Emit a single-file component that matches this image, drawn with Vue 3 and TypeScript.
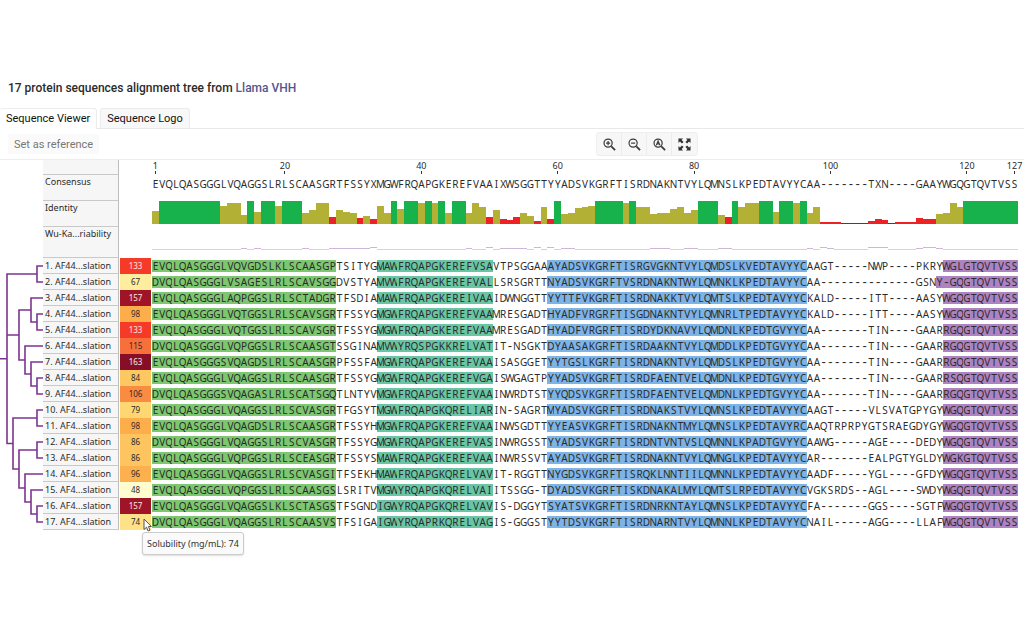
<script setup lang="ts">
interface Row {
  name: string
  score: number
  color: string
  light?: boolean
  parts: string
}
type Tree = number | [Tree, Tree]
interface Bar {
  height: number
  kind: string
}

const consensus =
  'EVQLQASGGGLVQAGGSLRLSCAASGRTFSSYXMGWFRQAPGKEREFVAAIXWSGGTTYYADSVKGRFTISRDNAKNTVYLQMNSLKPEDTAVYYCAA-------TXN----GAAYWGQGTQVTVSS'

const regions = ['fr1', 'gap', 'fr2', 'gap', 'fr3', 'gap', 'fr4']

const rows: Row[] = [
  { name: '1. AF44...slation', score: 133, color: '#f63a28', light: true, parts: 'EVQLQASGGGLVQVGDSLKLSCAASGP|TSITYG|MAWFRQAPGKEREFVSA|VTPSGGAA|AYADSVKGRFTISRGVGKNTVYLQMDSLKVEDTAVYYC|AAGT-----NWP----PKRY|WGLGTQVTVSS' },
  { name: '2. AF44...slation', score: 67, color: '#feec9f', parts: 'DVQLQASGGGLVSAGESLRLSCAVSGG|DVSTYA|MVWFRQAPGKEREFVAL|LSRSGRTT|NYADSVKGRFTVSRDNAKNTWYLQMNKLKPEDTAVYYC|AA--------------GSN|Y-GQGTQVTVSS' },
  { name: '3. AF44...slation', score: 157, color: '#a01427', light: true, parts: 'EVQLQASGGGLAQPGGSLRLSCTADGR|TFSDIA|MAWFRQAPGKEREIVAA|IDWNGGTT|YYTTFVKGRFTISRDNAKKTVYLQMTSLKPEDTAVYYC|KALD-----ITT----AASY|WGQGTQVTVSS' },
  { name: '4. AF44...slation', score: 98, color: '#fdae4b', parts: 'EVQLQASGGGLVQTGGSLRLSCAVSGR|TFSSYG|MGWFRQAPGKEREFVAA|MRESGADT|HYADFVRGRFTISGDNAKNTVYLQMNRLTPEDTAVYYC|KALD-----ITT----AASY|WGQGTQVTVSS' },
  { name: '5. AF44...slation', score: 133, color: '#f63a28', light: true, parts: 'EVQLQASGGGLVQTGGSLRLSCAVSGR|TFSSYG|MGWFRQAPGKEREFVAA|MRESGADT|HYADFVRGRFTISRDYDKNAVYLQMDNLKPEDTGVYYC|AA-------TIN----GAAR|RGQGTQVTVSS' },
  { name: '6. AF44...slation', score: 115, color: '#f7703c', parts: 'DVQLQASGGGLVQPGGSLRLSCAASGT|SSGINA|MVWYRQSPGKKRELVAT|IT-NSGKT|DYAASAKGRFTISRDAAKNTVYLQMDDLKPEDTGVYYC|AA-------TIN----GAAR|RGQGTQVTVSS' },
  { name: '7. AF44...slation', score: 163, color: '#860f26', light: true, parts: 'EVQLQASGGGSVQAGDSLRLSCAASGR|PFSSFA|MGWFRQAPGKEREFVAA|ISASGGET|YYTGSLKGRFTISRDNAKNTVYLQMDSLKPEDTGVYYC|AA-------TIN----GAAR|RGQGTQVTVSS' },
  { name: '8. AF44...slation', score: 84, color: '#fdc862', parts: 'EVQLQASGGGLVQAGGSLRLSCAASGR|TFSSYG|MGWFRQAPGKEREFVGA|ISWGAGTP|YYADSVKGRFTISRDFAENTVELQMDNLKPEDTGVYYC|AA-------TIN----GAAR|RSQGTQVTVSS' },
  { name: '9. AF44...slation', score: 106, color: '#f98c42', parts: 'DVQLQASGGGSVQAGASLRLSCATSGQ|TLNTYV|MGWFRQAPGKEREFVAA|INWRDTST|YYQDSVKGRFTISRDFAENTVELQMDNLKPEDTGVYYC|AA-------TIN----GAAR|RGQGTQVTVSS' },
  { name: '10. AF4...slation', score: 79, color: '#fed772', parts: 'EVQLQASGGGLVQAGGSLRLSCVASGR|TFGSYT|MGWFRQAPGKQRELIAR|IN-SAGRT|MYADSVKGRFTISRDNAKSTVYLQMNSLKPEDTAVYYC|AAGT-----VLSVATGPYGY|WGQGTQVTVSS' },
  { name: '11. AF4...slation', score: 98, color: '#fdae4b', parts: 'EVQLQASGGGLVQAGDSLRLSCAASGR|TFSSYH|MGWFRQAPGKEREFVAA|INWSGDTT|YYEASVKGRFTISRDNAKNTMYLQMNSLKPEDTAVYRC|AAQTRPRPYGTSRAEGDYGY|WGQGTQVTVSS' },
  { name: '12. AF4...slation', score: 86, color: '#fdc460', parts: 'DVQLQASGGGLVQAGGSLRLSCVASGR|TFSSYG|MGWFRQAPGKEREFVAS|INWRGSST|YYADSVKGRFTISRDNTVNTVSLQMNNLKPADTGVYYC|AAWG-----AGE----DEDY|WGQGTQVTVSS' },
  { name: '13. AF4...slation', score: 86, color: '#fdc460', parts: 'EVQLQASGGGLVQPGGSLRLSCEASGR|TFSSYS|MAWFRQAPGKEREFVAA|INWRSSVT|AYADSVKGRFTISRDNAKNTVYLQMNGLKPEDTAVYYC|AR-------EALPGTYGLDY|WGKGTQVTVSS' },
  { name: '14. AF4...slation', score: 96, color: '#fdb04e', parts: 'EVQLQASGGGLVQAGGSLRLSCVASGI|TFSEKH|MAWFRQAPGKQRELVAV|IT-RGGTT|NYGDSVKGRFTISRQKLNNTIILQMNNLKPEDTAVYYC|AADF-----YGL----GFDY|WGQGTQVTVSS' },
  { name: '15. AF4...slation', score: 48, color: '#fffdcf', parts: 'EVQLQASGGGLVQPGGSLRLSCAASGS|LSRITV|MGWYRQAPGKQRELVAI|ITSSGG-T|DYADSVKGRFTISKDNAKALMYLQMTSLRPEDTAVYYC|VGKSRDS--AGL----SWDY|WGQGTQVTVSS' },
  { name: '16. AF4...slation', score: 157, color: '#a01427', light: true, parts: 'EVQLQASGGGLVQAGGSLKLSCTASGS|TFSGND|IGWYRQAPGKQRELVAV|IS-DGGYT|SYATSVKGRFTISRDNRKNTAYLQMNSLKPEDTAVYYC|FA-------GGS----SGTF|WGQGTQVTVSS' },
  { name: '17. AF4...slation', score: 74, color: '#fee287', parts: 'DVQLQASGGGLVQAGGSLRLSCAASVS|TFSIGA|IGWYRQAPRKQRELVAG|IS-GGGST|YYTDSVKGRFTISRDNARNTVYLQMNNLKPEDTAVYYC|NAIL-----AGG----LLAF|WGQGTQVTVSS' },
]

const residues = rows.map((row) =>
  row.parts.split('|').flatMap((part, i) => [...part].map((letter) => ({ letter, region: regions[i] }))),
)

const ticks = [1, 20, 40, 60, 80, 100, 120, 127]

// Percent identity per alignment column; "*n" repeats an entry n times.
// g = fully conserved, y = partly conserved, r = variable, n = no data.
const identitySpec =
  'y56 g*9 y79 y90*2 y40 g y53 g*2 y79 g*3 y47 y60 y90*2 r31 y60 y54 y50 r26 y37 r20 y79 y47 g y65 g*2 y90 g y90 g y50 g*2 y47 y90 y76 r31 y60 r23 r17 r31 y50 y37 r13 y76 r20 g y43 y50 y70 y76 y79 g*4 y90 g y76*2 y43 y50*2 y66 y76 y50 y60 g*3 y40 r31 g y76 y90*2 g*2 y54 g*2 y90 g y50 y76 r7*3 n6*4 r15 r21 r18 n6 r7*3 r27 r21*2 y43 y50 y90 y76 g*8'
const identity: Bar[] = identitySpec.split(' ').flatMap((item) => {
  const [value, count] = item.split('*')
  const bar = { kind: value[0], height: Number(value.slice(1)) || 100 }
  return Array.from({ length: Number(count ?? 1) }, () => bar)
})

const lowPeaks = new Set([14, 16, 23, 27, 28, 29, 30, 31, 32, 47, 52, 53, 54, 55, 61, 62, 74, 75, 76, 79, 80, 84, 85, 97, 100, 113, 116])
const highPeaks = new Set([33, 50, 57, 59, 99, 106, 107, 108, 114, 115])
const variability = Array.from({ length: consensus.length }, (_, i) =>
  highPeaks.has(i + 1) ? 'high' : lowPeaks.has(i + 1) ? 'low' : 'flat',
)

const tree: Tree = [
  [[1, 2], [[3, [4, 5]], [6, [7, [8, 9]]]]] as Tree,
  [[10, 11], [[12, 13], [14, [15, [16, 17]]]]] as Tree,
]
const rowHeight = 16
const treeWidth = 43
const segments: string[] = []

function height(node: Tree): number {
  return typeof node === 'number' ? 0 : 1 + Math.max(height(node[0]), height(node[1]))
}
function drawNode(node: Tree): { x: number; y: number } {
  if (typeof node === 'number') return { x: treeWidth, y: (node - 1) * rowHeight + rowHeight / 2 }
  const a = drawNode(node[0])
  const b = drawNode(node[1])
  const x = treeWidth - 6 * height(node)
  segments.push(`M${a.x} ${a.y}H${x}V${b.y}H${b.x}`)
  return { x, y: (a.y + b.y) / 2 }
}
function drawTree(): string {
  const [upper, lower] = tree as [[Tree, Tree], Tree]
  const first = drawNode(upper[0])
  const second = drawNode(upper[1])
  const third = drawNode(lower)
  const x = 7
  segments.push(`M${first.x} ${first.y}H${x}V${third.y}H${third.x}M${x} ${second.y}H${second.x}`)
  segments.push(`M0 ${(first.y + third.y) / 2}H${x}`)
  return segments.join('')
}
const treePath = drawTree()
</script>

<template>
  <main class="page">
    <h1 class="title">17 protein sequences alignment tree from <a href="#">Llama VHH</a></h1>

    <div class="tabs" role="tablist">
      <button class="tab active" type="button" role="tab" aria-selected="true">Sequence Viewer</button>
      <button class="tab" type="button" role="tab" aria-selected="false">Sequence Logo</button>
    </div>

    <div class="toolbar">
      <button class="reference" type="button">Set as reference</button>
      <div class="zoom">
        <button type="button" aria-label="Zoom in">
          <svg viewBox="0 0 14 14"><circle cx="5.5" cy="5.5" r="4.4" /><path d="M3.3 5.5h4.4M5.5 3.3v4.4" /><path class="handle" d="M9 9l4 4" /></svg>
        </button>
        <button type="button" aria-label="Zoom out">
          <svg viewBox="0 0 14 14"><circle cx="5.5" cy="5.5" r="4.4" /><path d="M3.3 5.5h4.4" /><path class="handle" d="M9 9l4 4" /></svg>
        </button>
        <button type="button" aria-label="Zoom to residues">
          <svg viewBox="0 0 14 14"><circle cx="5.5" cy="5.5" r="4.4" /><path d="M3.6 7.8L5.5 3.2L7.4 7.8M4.3 6.4h2.4" /><path class="handle" d="M9 9l4 4" /></svg>
        </button>
        <button type="button" aria-label="Fit to window">
          <svg viewBox="0 0 14 14"><path class="solid" d="M.5 .5h5L3.900 2.100L6 4.200L4.200 6L2.100 3.900L.5 5.500zM13.500 .5v5L11.900 3.900L9.800 6L8 4.200L10.100 2.100L8.500 .5zM.5 13.500v-5L2.100 10.100L4.200 8L6 9.800L3.900 11.900L5.500 13.500zM13.500 13.500h-5L10.100 11.900L8 9.800L9.800 8L11.900 10.100L13.500 8.500z" /></svg>
        </button>
      </div>
    </div>

    <div class="viewer">
      <svg class="tree" :width="treeWidth" :height="rows.length * rowHeight" aria-hidden="true">
        <path :d="treePath" />
      </svg>
      <table class="alignment">
        <colgroup>
          <col class="col-name" />
          <col class="col-score" />
          <col />
        </colgroup>
        <tbody>
          <tr class="ruler-row">
            <th></th>
            <td></td>
            <td>
              <div class="columns">
                <span v-for="t in ticks" :key="t" class="tick" :style="{ gridColumn: t }">{{ t }}</span>
              </div>
            </td>
          </tr>
          <tr class="consensus-row">
            <th scope="row">Consensus</th>
            <td></td>
            <td>
              <div class="columns letters"><span v-for="(c, i) in consensus" :key="i" :class="{ dash: c === '-' }">{{ c }}</span></div>
            </td>
          </tr>
          <tr class="identity-row">
            <th scope="row">Identity</th>
            <td></td>
            <td>
              <div class="columns bars">
                <i v-for="(b, i) in identity" :key="i" :class="b.kind" :style="{ height: b.height + '%' }"></i>
              </div>
            </td>
          </tr>
          <tr class="variability-row">
            <th scope="row">Wu-Ka...riability</th>
            <td></td>
            <td>
              <div class="columns wave"><i v-for="(v, i) in variability" :key="i" :class="v"></i></div>
            </td>
          </tr>
          <tr v-for="(row, r) in rows" :key="row.name" class="sequence-row">
            <th scope="row">{{ row.name }}</th>
            <td>
              <div class="score" :class="{ light: row.light }" :style="{ background: row.color }">
                {{ row.score }}
                <template v-if="r === rows.length - 1">
                  <svg class="pointer" viewBox="0 0 9 14" aria-hidden="true"><path d="M1 1v10.500l2.500-2.300l1.600 3.800l1.900-.8l-1.600-3.700h3z" /></svg>
                  <span class="tooltip" role="tooltip">Solubility (mg/mL): 74</span>
                </template>
              </div>
            </td>
            <td>
              <div class="columns letters"><span v-for="(c, i) in residues[r]" :key="i" :class="[c.region, { dash: c.letter === '-' }]">{{ c.letter }}</span></div>
            </td>
          </tr>
        </tbody>
      </table>
    </div>
  </main>
</template>

<style>
body {
  margin: 0;
  background: #fff;
}
</style>

<style scoped>
.page {
  box-sizing: border-box;
  min-height: 100vh;
  padding-top: 78px;
  color: #2b2b2b;
  font-family: Roboto, "Liberation Sans", sans-serif;
}
.title {
  margin: 0 8px;
  font-size: 12px;
  font-weight: 500;
  line-height: 20px;
}
.title a {
  color: #55568c;
  text-decoration: none;
}
button {
  font-family: inherit;
  margin: 0;
  cursor: pointer;
}
.tabs {
  display: flex;
  gap: 3px;
  margin-top: 10px;
  border-bottom: 1px solid #e8e8e8;
}
.tab {
  height: 20px;
  padding: 0 6px;
  border: 1px solid #ececec;
  border-bottom: 0;
  border-radius: 3px 3px 0 0;
  background: #f8f8f8;
  color: #111;
  font-size: 11px;
  font-weight: 400;
  line-height: 20px;
}
.tab.active {
  margin-bottom: -1px;
  height: 21px;
  border-left: 0;
  background: #fff;
}
.toolbar {
  display: grid;
  grid-template-columns: 1fr auto 1fr;
  align-items: center;
  height: 30px;
  border-bottom: 1px solid #ededed;
}
.reference {
  justify-self: start;
  margin-left: 8px;
  height: 20px;
  padding: 0 6px;
  border: 0;
  border-radius: 3px;
  background: #fafafa;
  color: #777;
  font-size: 11px;
}
.zoom {
  grid-column: 3;
  justify-self: start;
  margin-left: 84px;
  display: flex;
  border: 1px solid #eee;
  border-radius: 3px;
  background: #f7f7f7;
}
.zoom button {
  display: grid;
  place-items: center;
  width: 25px;
  height: 22px;
  padding: 0;
  border: 0;
  border-right: 1px solid #ececec;
  background: none;
}
.zoom button:last-child {
  border-right: 0;
}
.zoom svg {
  width: 13px;
  height: 13px;
  fill: none;
  stroke: #3c3c3c;
  stroke-width: 1.3;
}
.zoom .handle {
  stroke-width: 2;
}
.zoom .solid {
  fill: #333;
  stroke: none;
}
.viewer {
  display: flex;
  align-items: flex-end;
  padding-right: 6px;
  font-family: "Noto Sans", "Open Sans", sans-serif;
}
.tree {
  flex: none;
}
.tree path {
  fill: none;
  stroke: #7d3490;
  stroke-width: 1.6;
}
.alignment {
  flex: 1;
  min-width: 0;
  table-layout: fixed;
  border-spacing: 0;
}
.col-name {
  width: 76px;
}
.col-score {
  width: 33px;
}
.alignment th,
.alignment td {
  padding: 0;
  vertical-align: top;
}
.alignment th {
  box-sizing: border-box;
  padding-left: 2px;
  border-right: 1px solid #bdbdbd;
  border-bottom: 1px solid #c9c9c9;
  background: #f6f6f6;
  font-size: 9px;
  font-weight: 400;
  line-height: 14px;
  text-align: left;
  white-space: nowrap;
}
.ruler-row {
  height: 15px;
}
.consensus-row,
.identity-row {
  height: 26px;
}
.variability-row {
  height: 31px;
}
.sequence-row {
  height: 16px;
}
.sequence-row th {
  line-height: 15px;
}
.columns {
  display: grid;
  grid-template-columns: repeat(127, minmax(0, 1fr));
}
.letters span {
  display: flex;
  justify-content: center;
  height: 12px;
  font-size: 10px;
  line-height: 12px;
}
.letters .dash {
  font-family: "Liberation Sans", sans-serif;
  font-size: 13px;
}
.consensus-row .letters {
  padding-top: 3px;
}
.sequence-row .letters {
  padding-top: 2px;
}
.tick {
  display: flex;
  flex-direction: column;
  align-items: center;
  font-size: 9px;
  line-height: 11px;
}
.tick::after {
  content: "";
  width: 1px;
  height: 3px;
  background: #333;
}
.bars {
  align-items: end;
  height: 23px;
}
.g {
  background: #17b24b;
}
.y {
  background: #b2b135;
}
.r {
  background: #ee2224;
}
.n {
  background: #444;
}
.wave {
  align-items: end;
  height: 23px;
}
.wave i {
  box-sizing: border-box;
  height: 1px;
  border-top: 1px solid #d9cfdf;
}
.wave .low {
  height: 2px;
  border-color: #cdb6d6;
}
.wave .high {
  height: 3px;
  border-color: #cdb6d6;
}
.fr1 {
  background: #7cc770;
}
.fr2 {
  background: #69c6a5;
}
.fr3 {
  background: #7db3e5;
}
.fr4 {
  background: #ad83c1;
}
.score {
  position: relative;
  width: 31px;
  margin-left: 1px;
  height: 16px;
  font-size: 8px;
  line-height: 15px;
  text-align: center;
}
.score.light {
  color: #fbe6e2;
}
.pointer {
  position: absolute;
  left: 23px;
  top: 4px;
  width: 9px;
  height: 14px;
  z-index: 2;
}
.pointer path {
  fill: #fff;
  stroke: #555;
  stroke-width: 1;
}
.tooltip {
  position: absolute;
  left: 22px;
  top: 18px;
  z-index: 1;
  padding: 0 4px;
  border: 1px solid #ccc;
  border-radius: 3px;
  background: #fafafa;
  box-shadow: 0 1px 2px #0002;
  font-size: 9px;
  line-height: 21px;
  white-space: nowrap;
  color: #333;
}
</style>
